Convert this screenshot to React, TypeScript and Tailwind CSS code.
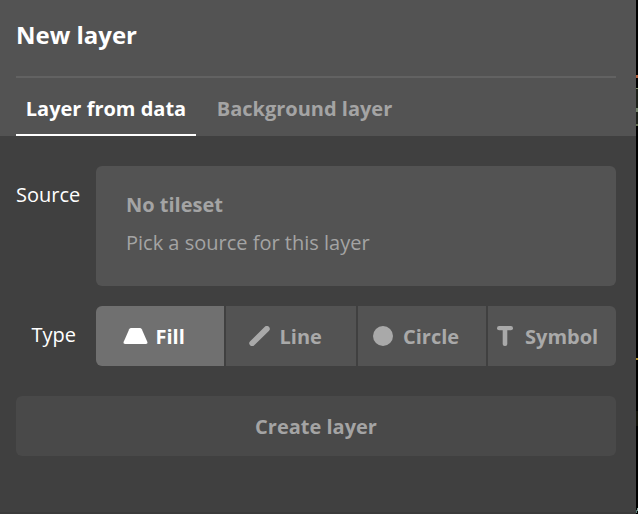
import type { ReactNode } from "react";

const types: { name: string; box: string; icon: ReactNode }[] = [
  {
    name: "Fill",
    box: "w-[128px] pl-[27px] gap-[7.500px] rounded-l-md bg-[#707070] text-white",
    icon: (
      <svg width="25" height="20" viewBox="0 0 25 20" fill="currentColor">
        <path d="M8.200 2h8.600c.9 0 1.600.4 2 1.200l5.500 12.500c.5 1.300-.1 2.300-1.500 2.300H2.200C.8 18 .2 17 .7 15.700L6.200 3.200C6.600 2.400 7.300 2 8.200 2z" />
      </svg>
    ),
  },
  {
    name: "Line",
    box: "w-[130px] pl-[23px] gap-[9.500px] bg-[#535353] text-[#a9a9a9]",
    icon: (
      <svg width="21" height="20" viewBox="0 0 21 20" fill="none" stroke="currentColor" strokeWidth="5.8" strokeLinecap="round">
        <path d="M3.200 17.200 17.800 2.900" />
      </svg>
    ),
  },
  {
    name: "Circle",
    box: "w-[128px] pl-[15px] gap-[10px] bg-[#535353] text-[#a9a9a9]",
    icon: (
      <svg width="20" height="20" viewBox="0 0 20 20" fill="currentColor">
        <circle cx="10" cy="10" r="10" />
      </svg>
    ),
  },
  {
    name: "Symbol",
    box: "w-[128px] pl-[9px] gap-[12px] rounded-r-md bg-[#535353] text-[#a9a9a9]",
    icon: (
      <svg width="16" height="20" viewBox="0 0 16 20" fill="currentColor">
        <rect width="16" height="4.300" rx="2.150" />
        <rect x="5.700" width="4.600" height="20" rx="2" />
      </svg>
    ),
  },
];

function MapEdge() {
  return (
    <svg width="2" height="514" viewBox="0 0 2 514" shapeRendering="crispEdges" className="shrink-0 bg-black">
      <rect y="75" width="2" height="3" fill="#b5613f" />
      <rect y="88" width="2" height="38" fill="#1e211b" />
      <rect y="88" width="2" height="1" fill="#7f8d69" />
      <rect y="108" width="2" height="4" fill="#75836c" />
      <rect y="124" width="2" height="2" fill="#626c50" />
      <rect y="358" width="2" height="2" fill="#b29233" />
      <rect y="411" width="2" height="15" fill="#12120a" />
      <rect x="1" y="508" width="1" height="3" fill="#8faaa0" />
      <rect y="510" width="1" height="3" fill="#587c75" />
    </svg>
  );
}

export default function App() {
  return (
    <div className="flex h-[514px] w-[638px] overflow-hidden bg-black font-['Open_Sans',sans-serif] text-xl leading-7">
      <main className="flex h-full w-[636px] shrink-0 flex-col border-b-2 border-[#3b3b3b] bg-[#404040]">
        <header className="h-[136px] shrink-0 bg-[#535353] px-4 pr-5">
          <h1 className="h-[76px] pt-[19px] text-2xl leading-8 font-bold text-white">New layer</h1>
          <nav className="flex h-[60px] border-t-2 border-[#626262] font-bold">
            <button className="h-[58px] w-[180px] border-b-2 border-white pt-[6px] text-white">Layer from data</button>
            <button className="h-[58px] w-[217px] pt-[4px] text-[#a4a4a4]">Background layer</button>
          </nav>
        </header>
        <section className="mt-[30px] flex h-[120px] shrink-0 px-4 pr-5">
          <label className="w-20 shrink-0 pt-[15px] text-white">Source</label>
          <div className="flex-1 rounded-md bg-[#535353] pt-[25px] pl-[30px] text-[#a4a4a4]">
            <p className="font-bold">No tileset</p>
            <p className="mt-[10px]">Pick a source for this layer</p>
          </div>
        </section>
        <section className="mt-5 flex h-[60px] shrink-0 px-4 pr-5">
          <label className="w-20 shrink-0 pt-[15px] pl-[15.500px] text-white">Type</label>
          <div className="flex gap-[2px]">
            {types.map((type) => (
              <button key={type.name} className={`flex items-center font-bold ${type.box}`}>
                {type.icon}
                <span className="pt-[2px]">{type.name}</span>
              </button>
            ))}
          </div>
        </section>
        <button className="mt-[30px] mr-5 ml-4 h-[60px] shrink-0 rounded-md bg-[#494949] pt-[2px] font-bold text-[#a4a4a4]">Create layer</button>
      </main>
      <MapEdge />
    </div>
  );
}
